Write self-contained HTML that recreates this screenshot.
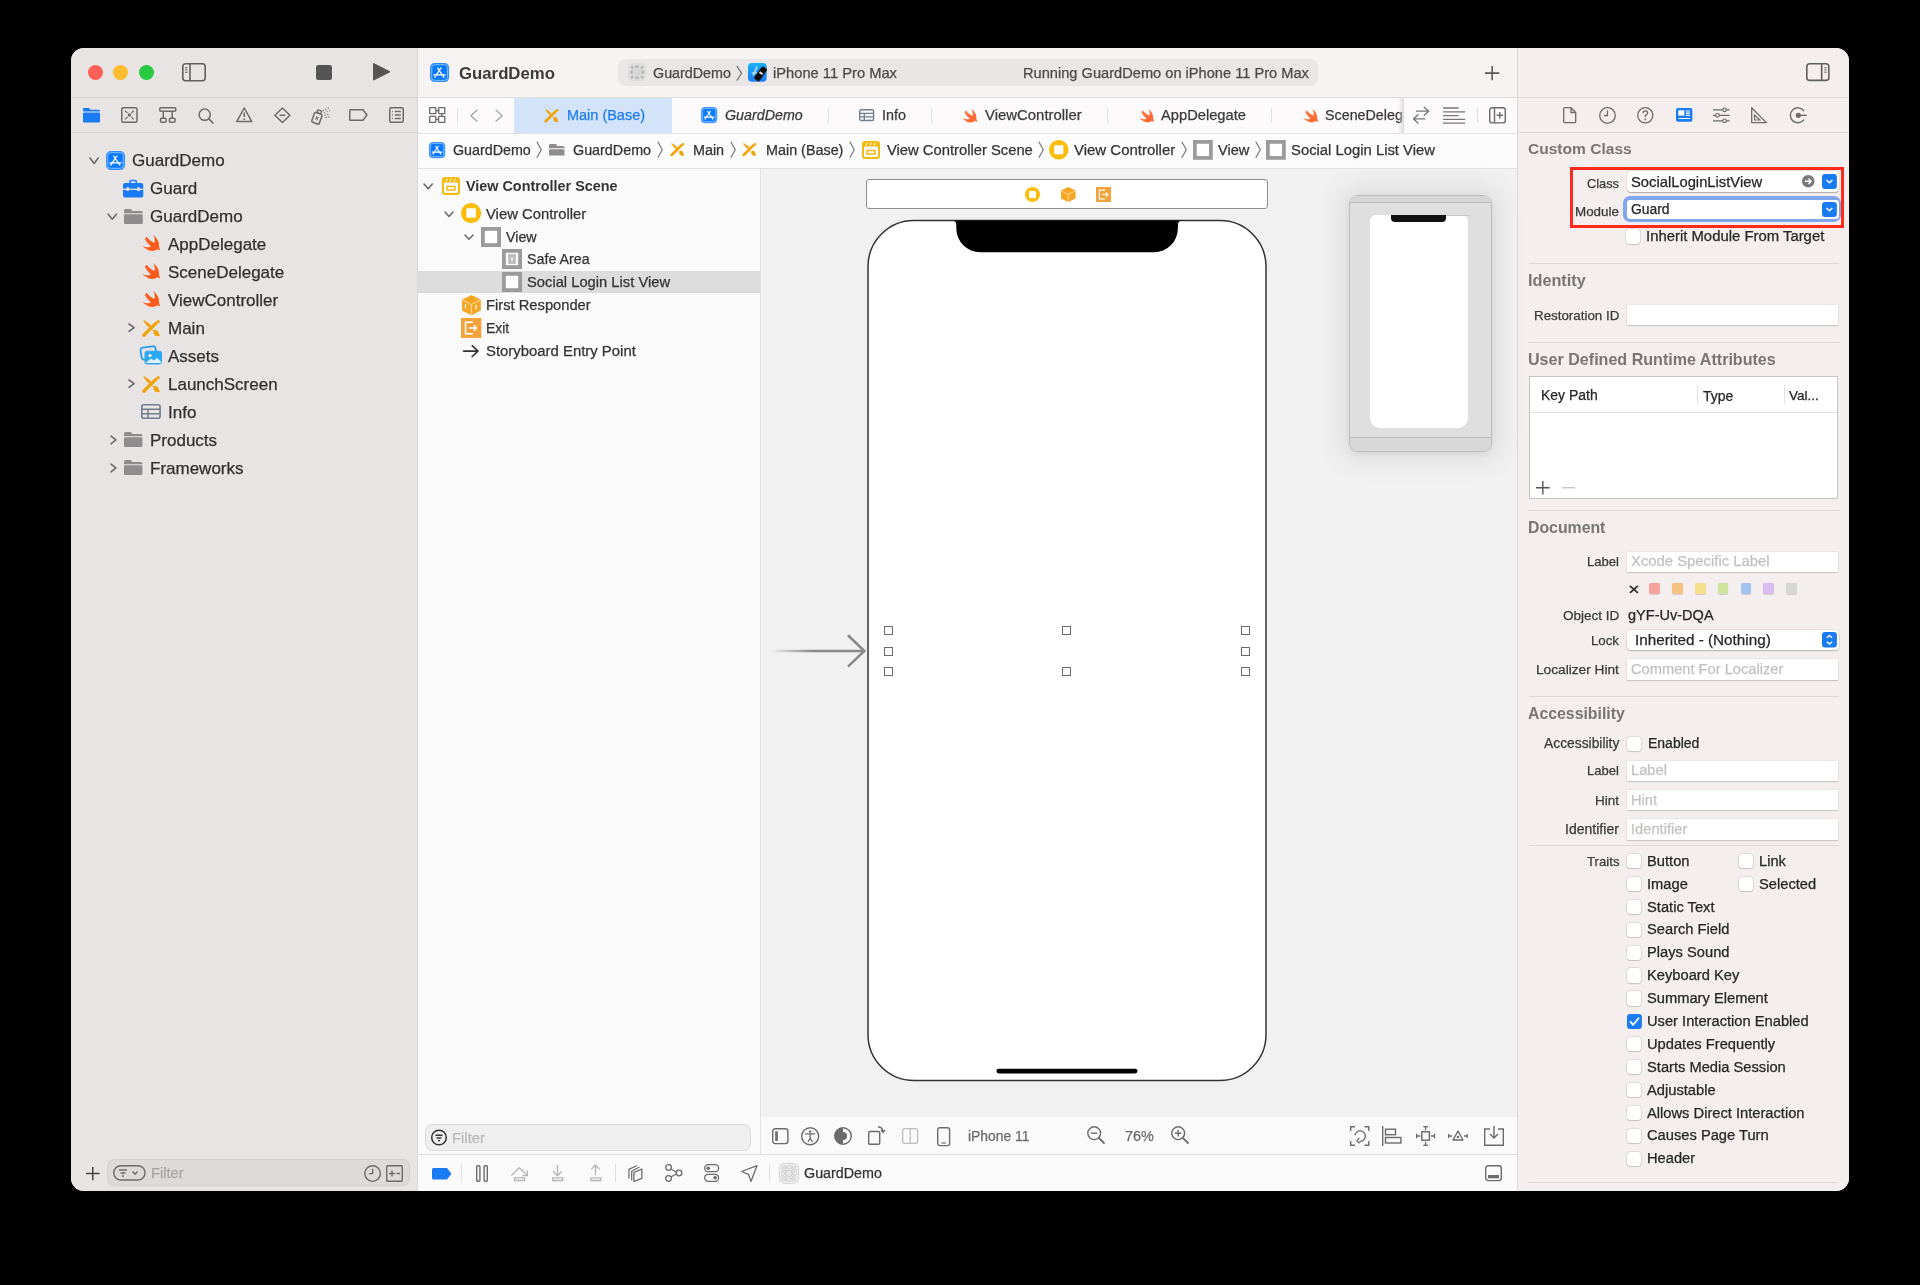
<!DOCTYPE html>
<html><head><meta charset="utf-8">
<style>
html,body{margin:0;padding:0;}
body{width:1920px;height:1285px;background:#000;position:relative;overflow:hidden;font-family:"Liberation Sans",sans-serif;color:#262626;}
.win{position:absolute;left:71px;top:48px;width:1778px;height:1143px;border-radius:13px;overflow:hidden;background:#f2eded;}
.in{position:absolute;left:-71px;top:-48px;width:1920px;height:1285px;}
.r{position:absolute;}
.t{position:absolute;white-space:nowrap;will-change:transform;-webkit-text-stroke:0.25px currentColor;}
svg{position:absolute;overflow:visible;}
</style></head>
<body>
<div class="win"><div class="in">
<div class="r" style="left:71.00px;top:48.00px;width:347.00px;height:1143.00px;background:#e9e4e4;"></div>
<div class="r" style="left:71.00px;top:97.00px;width:347.00px;height:1.00px;background:#d6d1d1;"></div>
<div class="r" style="left:71.00px;top:132.00px;width:347.00px;height:1.00px;background:#d6d1d1;"></div>
<div class="r" style="left:418.00px;top:48.00px;width:1100.00px;height:49.00px;background:#f7f3f3;"></div>
<div class="r" style="left:418.00px;top:97.00px;width:1100.00px;height:1.00px;background:#e0dcdc;"></div>
<div class="r" style="left:418.00px;top:98.00px;width:1100.00px;height:35.00px;background:#fcfafa;"></div>
<div class="r" style="left:418.00px;top:133.00px;width:1100.00px;height:1.00px;background:#e3e1e1;"></div>
<div class="r" style="left:418.00px;top:134.00px;width:1100.00px;height:34.00px;background:#fdfcfc;"></div>
<div class="r" style="left:418.00px;top:168.00px;width:1100.00px;height:1.00px;background:#e3e1e1;"></div>
<div class="r" style="left:418.00px;top:169.00px;width:342.00px;height:985.00px;background:#fafafa;"></div>
<div class="r" style="left:760.00px;top:169.00px;width:1.00px;height:985.00px;background:#e2e2e2;"></div>
<div class="r" style="left:761.00px;top:169.00px;width:757.00px;height:948.00px;background:#f1f1f1;"></div>
<div class="r" style="left:761.00px;top:1117.00px;width:757.00px;height:37.00px;background:#fafafa;"></div>
<div class="r" style="left:418.00px;top:1154.00px;width:1100.00px;height:1.00px;background:#e2e2e2;"></div>
<div class="r" style="left:418.00px;top:1155.00px;width:1100.00px;height:36.00px;background:#fafafa;"></div>
<div class="r" style="left:417.00px;top:48.00px;width:1.00px;height:1143.00px;background:#dcd7d7;"></div>
<div class="r" style="left:1517.00px;top:48.00px;width:1.00px;height:1143.00px;background:#dcd7d7;"></div>
<div class="r" style="left:1518.00px;top:48.00px;width:331.00px;height:1143.00px;background:#f4eeee;"></div>
<div class="r" style="left:1518.00px;top:97.00px;width:331.00px;height:1.00px;background:#dedada;"></div>
<div class="r" style="left:1518.00px;top:132.00px;width:331.00px;height:1.00px;background:#dedada;"></div>
<div class="r" style="left:88.00px;top:64.80px;width:15.20px;height:15.20px;background:#fe5f57;border-radius:50%"></div>
<div class="r" style="left:113.30px;top:64.80px;width:15.20px;height:15.20px;background:#febc2e;border-radius:50%"></div>
<div class="r" style="left:138.60px;top:64.80px;width:15.20px;height:15.20px;background:#28c840;border-radius:50%"></div>
<svg style="left:182.00px;top:62.50px;" width="24.00" height="18.50" viewBox="0 0 24.00 18.50"><rect x="0.8" y="0.8" width="22.4" height="16.9" rx="3" fill="none" stroke="#5f5f5f" stroke-width="1.6"/>
<path d="M8 1 V17.5" stroke="#5f5f5f" stroke-width="1.6"/>
<path d="M3 4.8 H5.5 M3 7 H5.5 M3 9.2 H5.5" stroke="#5f5f5f" stroke-width="1.1"/></svg>
<div class="r" style="left:316.00px;top:64.80px;width:15.60px;height:15.20px;background:#555555;border-radius:2.5px"></div>
<svg style="left:373.00px;top:63.00px;" width="17.50" height="17.60" viewBox="0 0 17.50 17.60"><path d="M0.5 0.5 L17 8.8 L0.5 17.1 Z" fill="#555555" stroke="#555" stroke-linejoin="round" stroke-width="1"/></svg>
<svg style="left:83.25px;top:108.00px;" width="17.00" height="14.50" viewBox="0 0 17.00 14.50"><path fill="#1a7cf5" d="M1.2 0 H6 L7.5 1.8 H15.8 Q17 1.8 17 3 V3.6 H0 V1.2 Q0 0 1.2 0 Z"/>
<rect x="0" y="4.6" width="17" height="9.9" rx="1" fill="#1a7cf5"/></svg>
<svg style="left:121.25px;top:107.00px;" width="16.75" height="16.00" viewBox="0 0 16.75 16.00"><rect x="0.75" y="0.75" width="15.25" height="14.5" rx="1.5" fill="none" stroke="#6b6b6b" stroke-width="1.5"/>
<circle cx="8.4" cy="8" r="1.7" fill="#6b6b6b"/><path d="M4 3.6 L6.5 6 M12.8 3.6 L10.3 6 M4 12.4 L6.5 10 M12.8 12.4 L10.3 10" stroke="#6b6b6b" stroke-width="1.2"/></svg>
<svg style="left:158.75px;top:107.00px;" width="17.50" height="16.00" viewBox="0 0 17.50 16.00"><rect x="0.75" y="0.75" width="16" height="3.6" rx="1" fill="none" stroke="#6b6b6b" stroke-width="1.5"/>
<path d="M4.3 4.4 V11 M13.2 4.4 V11" stroke="#6b6b6b" stroke-width="1.5"/>
<rect x="1.5" y="11.2" width="5.6" height="4" rx="1" fill="none" stroke="#6b6b6b" stroke-width="1.5"/>
<rect x="10.4" y="11.2" width="5.6" height="4" rx="1" fill="none" stroke="#6b6b6b" stroke-width="1.5"/></svg>
<svg style="left:198.00px;top:107.50px;" width="16.00" height="16.00" viewBox="0 0 16.00 16.00"><circle cx="6.7" cy="6.7" r="5.6" fill="none" stroke="#6b6b6b" stroke-width="1.5"/><path d="M10.8 10.8 L15 15" stroke="#6b6b6b" stroke-width="1.7" stroke-linecap="round"/></svg>
<svg style="left:235.50px;top:107.00px;" width="16.50" height="15.50" viewBox="0 0 16.50 15.50"><path d="M8.25 1 L15.8 14.6 H0.7 Z" fill="none" stroke="#6b6b6b" stroke-width="1.5" stroke-linejoin="round"/><path d="M8.25 5.5 V10" stroke="#6b6b6b" stroke-width="1.6"/><circle cx="8.25" cy="12.2" r="0.9" fill="#6b6b6b"/></svg>
<svg style="left:273.75px;top:107.00px;" width="16.75" height="16.50" viewBox="0 0 16.75 16.50"><path d="M8.4 1 L15.9 8.25 L8.4 15.5 L0.9 8.25 Z" fill="none" stroke="#6b6b6b" stroke-width="1.5" stroke-linejoin="round"/><path d="M5.5 8.25 H11.3" stroke="#6b6b6b" stroke-width="1.6"/></svg>
<svg style="left:310.75px;top:106.50px;" width="19.50" height="17.50" viewBox="0 0 19.50 17.50"><g transform="rotate(20 6 11)"><rect x="2" y="6" width="8" height="10.5" rx="1.5" fill="none" stroke="#6b6b6b" stroke-width="1.5"/><rect x="4" y="3" width="4" height="3" fill="none" stroke="#6b6b6b" stroke-width="1.3"/>
<path d="M4.5 9.5 L7.5 13 M7.5 9.5 L4.5 13" stroke="#6b6b6b" stroke-width="1"/></g>
<g fill="#6b6b6b"><circle cx="12.5" cy="3.5" r="0.65"/><circle cx="14.8" cy="2.5" r="0.65"/><circle cx="17.3" cy="1.2" r="0.65"/><circle cx="13.5" cy="5.8" r="0.65"/><circle cx="16" cy="4.6" r="0.65"/><circle cx="18.6" cy="3.8" r="0.65"/><circle cx="14.2" cy="8.2" r="0.65"/><circle cx="16.8" cy="7.5" r="0.65"/><circle cx="15.3" cy="10.5" r="0.65"/><circle cx="18" cy="10" r="0.65"/></g></svg>
<svg style="left:348.75px;top:109.00px;" width="18.75" height="12.00" viewBox="0 0 18.75 12.00"><path d="M1.5 0.75 H14 L17.9 6 L14 11.25 H1.5 Q0.75 11.25 0.75 10.5 V1.5 Q0.75 0.75 1.5 0.75 Z" fill="none" stroke="#6b6b6b" stroke-width="1.5" stroke-linejoin="round"/></svg>
<svg style="left:388.75px;top:107.00px;" width="15.00" height="16.00" viewBox="0 0 15.00 16.00"><rect x="0.75" y="0.75" width="13.5" height="14.5" rx="1.5" fill="none" stroke="#6b6b6b" stroke-width="1.5"/>
<path d="M3.2 4.5 H4 M3.2 8 H4 M3.2 11.5 H4" stroke="#6b6b6b" stroke-width="1.3"/><path d="M5.8 4.5 H11.8 M5.8 8 H11.8 M5.8 11.5 H11.8" stroke="#6b6b6b" stroke-width="1.5"/></svg>
<div class="t" style="left:132.00px;top:152.00px;font-size:17.00px;line-height:17.00px;color:#303030;">GuardDemo</div>
<div class="t" style="left:150.00px;top:180.00px;font-size:17.00px;line-height:17.00px;color:#303030;">Guard</div>
<div class="t" style="left:150.00px;top:208.00px;font-size:17.00px;line-height:17.00px;color:#303030;">GuardDemo</div>
<div class="t" style="left:168.00px;top:236.00px;font-size:17.00px;line-height:17.00px;color:#303030;">AppDelegate</div>
<div class="t" style="left:168.00px;top:264.00px;font-size:17.00px;line-height:17.00px;color:#303030;">SceneDelegate</div>
<div class="t" style="left:168.00px;top:292.00px;font-size:17.00px;line-height:17.00px;color:#303030;">ViewController</div>
<div class="t" style="left:168.00px;top:320.00px;font-size:17.00px;line-height:17.00px;color:#303030;">Main</div>
<div class="t" style="left:168.00px;top:348.00px;font-size:17.00px;line-height:17.00px;color:#303030;">Assets</div>
<div class="t" style="left:168.00px;top:376.00px;font-size:17.00px;line-height:17.00px;color:#303030;">LaunchScreen</div>
<div class="t" style="left:168.00px;top:404.00px;font-size:17.00px;line-height:17.00px;color:#303030;">Info</div>
<div class="t" style="left:150.00px;top:432.00px;font-size:17.00px;line-height:17.00px;color:#303030;">Products</div>
<div class="t" style="left:150.00px;top:460.00px;font-size:17.00px;line-height:17.00px;color:#303030;">Frameworks</div>
<svg style="left:89.25px;top:157.00px;" width="10.25" height="7.50" viewBox="0 0 10.25 7.50"><path d="M1 1 L5.12 6.50 L9.25 1" stroke="#6e6b6b" stroke-width="1.60" fill="none" stroke-linecap="round" stroke-linejoin="round"/></svg>
<svg style="left:106.25px;top:150.50px;" width="19.00" height="19.00" viewBox="0 0 19.00 19.00"><g transform="scale(1.0000)">
<rect x="0.5" y="0.5" width="18" height="18" rx="4.2" fill="#0a7bff" stroke="#2e8dff" stroke-width="1"/>
<rect x="1.7" y="1.7" width="15.6" height="15.6" rx="3" fill="none" stroke="#cfe4ff" stroke-width="0.8" opacity="0.8"/>
<g stroke="#fff" stroke-width="1.25" stroke-linecap="round" fill="none">
<path d="M7.7 5 L9.3 7.3 L10.9 5 M9.3 7.3 L4.8 14.2 M9.6 8 L13.9 14.2 M3.9 11.9 H11.6 M12.6 11.9 H15.1"/>
</g></g></svg>
<svg style="left:123.00px;top:179.50px;" width="20.25" height="17.50" viewBox="0 0 20.25 17.50"><path d="M7 3 V1.5 Q7 0.5 8 0.5 H12.25 Q13.25 0.5 13.25 1.5 V3" fill="none" stroke="#1a7cf5" stroke-width="1.6"/>
<rect x="0" y="3" width="20.25" height="14.5" rx="2" fill="#1a7cf5"/>
<rect x="0" y="8.6" width="20.25" height="1.3" fill="#e9e4e4"/><rect x="3.5" y="7.3" width="2.6" height="3.8" rx="0.5" fill="#e9e4e4"/><rect x="14.2" y="7.3" width="2.6" height="3.8" rx="0.5" fill="#e9e4e4"/></svg>
<svg style="left:107.00px;top:213.00px;" width="10.50" height="7.20" viewBox="0 0 10.50 7.20"><path d="M1 1 L5.25 6.20 L9.50 1" stroke="#6e6b6b" stroke-width="1.60" fill="none" stroke-linecap="round" stroke-linejoin="round"/></svg>
<svg style="left:123.75px;top:208.75px;" width="18.75" height="15.00" viewBox="0 0 18.75 15.00"><path fill="#8e8c8c" d="M1.5 0 H7 L8.5 2 H17.2 Q18.8 2 18.8 3.5 V4.2 H0 V1.5 Q0 0 1.5 0 Z"/>
<rect x="0" y="5.2" width="18.8" height="9.8" rx="1.2" fill="#8e8c8c"/></svg>
<svg style="left:141.90px;top:235.20px;" width="18.50" height="16.60" viewBox="0 0 18.50 16.60"><g transform="scale(1.000)"><path fill="#fa5a1a" d="M11.35 0 C14.5 2.5 17.5 6.5 16.9 10.9 C17.4 12.8 18 14.5 18.3 15.8 C17.2 14.8 16.2 14.3 15.3 14.3 C12.5 16.6 7.5 16.6 4.2 13.8 C2.6 12.8 1.2 11.8 0.2 10.9 C3.3 12.2 6.6 12.8 9.2 11.6 C6.8 9.6 4.3 6.8 2.5 3 L3.6 3.3 L4.6 1.8 C7 4.5 9.5 7 12.6 8.1 C13.2 5.5 12.6 2.5 11.35 0 Z"/>
<path d="M3.4 3.1 L8.5 8.3" stroke="#fff" stroke-opacity="0.35" stroke-width="0.5"/></g></svg>
<svg style="left:141.90px;top:263.20px;" width="18.50" height="16.60" viewBox="0 0 18.50 16.60"><g transform="scale(1.000)"><path fill="#fa5a1a" d="M11.35 0 C14.5 2.5 17.5 6.5 16.9 10.9 C17.4 12.8 18 14.5 18.3 15.8 C17.2 14.8 16.2 14.3 15.3 14.3 C12.5 16.6 7.5 16.6 4.2 13.8 C2.6 12.8 1.2 11.8 0.2 10.9 C3.3 12.2 6.6 12.8 9.2 11.6 C6.8 9.6 4.3 6.8 2.5 3 L3.6 3.3 L4.6 1.8 C7 4.5 9.5 7 12.6 8.1 C13.2 5.5 12.6 2.5 11.35 0 Z"/>
<path d="M3.4 3.1 L8.5 8.3" stroke="#fff" stroke-opacity="0.35" stroke-width="0.5"/></g></svg>
<svg style="left:141.90px;top:291.20px;" width="18.50" height="16.60" viewBox="0 0 18.50 16.60"><g transform="scale(1.000)"><path fill="#fa5a1a" d="M11.35 0 C14.5 2.5 17.5 6.5 16.9 10.9 C17.4 12.8 18 14.5 18.3 15.8 C17.2 14.8 16.2 14.3 15.3 14.3 C12.5 16.6 7.5 16.6 4.2 13.8 C2.6 12.8 1.2 11.8 0.2 10.9 C3.3 12.2 6.6 12.8 9.2 11.6 C6.8 9.6 4.3 6.8 2.5 3 L3.6 3.3 L4.6 1.8 C7 4.5 9.5 7 12.6 8.1 C13.2 5.5 12.6 2.5 11.35 0 Z"/>
<path d="M3.4 3.1 L8.5 8.3" stroke="#fff" stroke-opacity="0.35" stroke-width="0.5"/></g></svg>
<svg style="left:127.50px;top:322.90px;" width="7.10" height="9.40" viewBox="0 0 7.10 9.40"><path d="M1 1 L6.10 4.70 L1 8.40" stroke="#6e6b6b" stroke-width="1.60" fill="none" stroke-linecap="round" stroke-linejoin="round"/></svg>
<svg style="left:142.80px;top:319.80px;" width="17.00" height="16.50" viewBox="0 0 17.00 16.50"><g transform="scale(1.000)" fill="#f0a30a">
<path d="M0.2 0.8 Q0.4 0 1.2 0.2 Q5.5 2.5 8.4 5.8 L6.4 8.0 Q3 5 0.2 0.8 Z"/>
<path d="M0.8 15.2 L12.9 3.4" stroke="#f0a30a" stroke-width="3.3" stroke-linecap="round" fill="none"/>
<circle cx="15.1" cy="1.7" r="1.65"/>
<path d="M10.6 10.8 Q11.8 9.6 13.2 9.9 Q15.1 10.4 15.6 12.6 Q16 14.5 16.9 15.9 Q13.6 16.6 11.6 15.2 Q9.9 13.9 10.6 10.8 Z"/>
<circle cx="9.9" cy="10.2" r="0.8"/></g></svg>
<svg style="left:140.25px;top:345.90px;" width="22.50" height="18.80" viewBox="0 0 22.50 18.80"><rect x="1" y="1" width="15" height="12" rx="2.5" fill="none" stroke="#25a0f0" stroke-width="1.8" transform="rotate(-8 8 7)"/>
<rect x="5" y="5.2" width="16.5" height="12.8" rx="2" fill="#2aa7f5" stroke="#2aa7f5" stroke-width="1"/>
<circle cx="10" cy="9.6" r="1.6" fill="#fff"/><path d="M6 16.5 L11 12.5 L14 14.5 L17 12 L21 15.5 V17 H6 Z" fill="#fff" opacity="0.85"/></svg>
<svg style="left:127.50px;top:378.90px;" width="7.10" height="9.40" viewBox="0 0 7.10 9.40"><path d="M1 1 L6.10 4.70 L1 8.40" stroke="#6e6b6b" stroke-width="1.60" fill="none" stroke-linecap="round" stroke-linejoin="round"/></svg>
<svg style="left:142.80px;top:375.80px;" width="17.00" height="16.50" viewBox="0 0 17.00 16.50"><g transform="scale(1.000)" fill="#f0a30a">
<path d="M0.2 0.8 Q0.4 0 1.2 0.2 Q5.5 2.5 8.4 5.8 L6.4 8.0 Q3 5 0.2 0.8 Z"/>
<path d="M0.8 15.2 L12.9 3.4" stroke="#f0a30a" stroke-width="3.3" stroke-linecap="round" fill="none"/>
<circle cx="15.1" cy="1.7" r="1.65"/>
<path d="M10.6 10.8 Q11.8 9.6 13.2 9.9 Q15.1 10.4 15.6 12.6 Q16 14.5 16.9 15.9 Q13.6 16.6 11.6 15.2 Q9.9 13.9 10.6 10.8 Z"/>
<circle cx="9.9" cy="10.2" r="0.8"/></g></svg>
<svg style="left:141.00px;top:404.00px;" width="19.90" height="15.00" viewBox="0 0 19.90 15.00"><rect x="0.8" y="0.8" width="18.3" height="13.4" rx="2" fill="none" stroke="#6f7f8f" stroke-width="1.6"/>
<path d="M0.8 5.2 H19 M0.8 9.8 H19 M7 5.2 V14" stroke="#6f7f8f" stroke-width="1.5"/></svg>
<svg style="left:109.70px;top:434.60px;" width="6.90" height="9.80" viewBox="0 0 6.90 9.80"><path d="M1 1 L5.90 4.90 L1 8.80" stroke="#6e6b6b" stroke-width="1.60" fill="none" stroke-linecap="round" stroke-linejoin="round"/></svg>
<svg style="left:123.75px;top:432.20px;" width="18.40" height="15.00" viewBox="0 0 18.40 15.00"><path fill="#8e8c8c" d="M1.5 0 H7 L8.5 2 H16.9 Q18.4 2 18.4 3.5 V4.2 H0 V1.5 Q0 0 1.5 0 Z"/>
<rect x="0" y="5.2" width="18.4" height="9.8" rx="1.2" fill="#8e8c8c"/></svg>
<svg style="left:109.70px;top:462.60px;" width="6.90" height="9.80" viewBox="0 0 6.90 9.80"><path d="M1 1 L5.90 4.90 L1 8.80" stroke="#6e6b6b" stroke-width="1.60" fill="none" stroke-linecap="round" stroke-linejoin="round"/></svg>
<svg style="left:123.75px;top:460.20px;" width="18.40" height="15.00" viewBox="0 0 18.40 15.00"><path fill="#8e8c8c" d="M1.5 0 H7 L8.5 2 H16.9 Q18.4 2 18.4 3.5 V4.2 H0 V1.5 Q0 0 1.5 0 Z"/>
<rect x="0" y="5.2" width="18.4" height="9.8" rx="1.2" fill="#8e8c8c"/></svg>
<div class="r" style="left:107.00px;top:1159.00px;width:303.00px;height:27.00px;background:#dedad9;border-radius:8px;box-shadow:inset 0 0 0 1px #d3cfcf"></div>
<div class="t" style="left:150.50px;top:1166.00px;font-size:14.70px;line-height:14.70px;color:#a9a6a6;">Filter</div>
<svg style="left:86.25px;top:1166.70px;" width="13.55" height="13.20" viewBox="0 0 13.55 13.20"><path d="M6.8 0 V13.2 M0 6.6 H13.55" stroke="#444" stroke-width="1.5"/></svg>
<svg style="left:112.50px;top:1165.20px;" width="32.80" height="15.80" viewBox="0 0 32.80 15.80"><rect x="0.75" y="0.75" width="31.3" height="14.3" rx="7.15" fill="none" stroke="#6b6b6b" stroke-width="1.4"/>
<path d="M6 5 H14 M7.5 8 H12.5 M9 11 H11" stroke="#6b6b6b" stroke-width="1.4"/><path d="M19.5 6.5 L22 9.2 L24.5 6.5" stroke="#6b6b6b" stroke-width="1.4" fill="none"/></svg>
<svg style="left:364.00px;top:1164.80px;" width="17.20" height="17.20" viewBox="0 0 17.20 17.20"><circle cx="8.6" cy="8.6" r="7.8" fill="none" stroke="#6b6b6b" stroke-width="1.4"/><path d="M8.6 3.8 V8.6 H5" stroke="#6b6b6b" stroke-width="1.4" fill="none"/></svg>
<svg style="left:386.00px;top:1164.80px;" width="17.00" height="17.00" viewBox="0 0 17.00 17.00"><rect x="0.7" y="0.7" width="15.6" height="15.6" rx="1" fill="none" stroke="#6b6b6b" stroke-width="1.4"/><path d="M3 8.5 H9 M6 5.5 V11.5 M10.5 8.5 H14" stroke="#6b6b6b" stroke-width="1.4"/></svg>
<div class="t" style="left:459.00px;top:66.00px;font-size:16.77px;line-height:16.77px;color:#3b3b3b;font-weight:bold;-webkit-text-stroke:0;">GuardDemo</div>
<div class="r" style="left:618.00px;top:59.00px;width:700.00px;height:27.00px;background:#ebe6e6;border-radius:8px"></div>
<div class="t" style="left:652.50px;top:66.00px;font-size:14.32px;line-height:14.32px;color:#4a4a4a;">GuardDemo</div>
<div class="t" style="left:773.30px;top:66.00px;font-size:14.71px;line-height:14.71px;color:#4a4a4a;">iPhone 11 Pro Max</div>
<div class="t" style="left:1023.40px;top:66.00px;font-size:14.63px;line-height:14.63px;color:#4a4a4a;">Running GuardDemo on iPhone 11 Pro Max</div>
<svg style="left:429.90px;top:62.80px;" width="19.10" height="19.10" viewBox="0 0 19.10 19.10"><g transform="scale(1.0053)">
<rect x="0.5" y="0.5" width="18" height="18" rx="4.2" fill="#0a7bff" stroke="#2e8dff" stroke-width="1"/>
<rect x="1.7" y="1.7" width="15.6" height="15.6" rx="3" fill="none" stroke="#cfe4ff" stroke-width="0.8" opacity="0.8"/>
<g stroke="#fff" stroke-width="1.25" stroke-linecap="round" fill="none">
<path d="M7.7 5 L9.3 7.3 L10.9 5 M9.3 7.3 L4.8 14.2 M9.6 8 L13.9 14.2 M3.9 11.9 H11.6 M12.6 11.9 H15.1"/>
</g></g></svg>
<svg style="left:627.80px;top:63.40px;" width="18.30" height="18.30" viewBox="0 0 18.30 18.30"><rect x="0" y="0" width="18.3" height="18.3" rx="4.5" fill="#dedcdc"/><ellipse cx="4.60" cy="4.60" rx="2.1" ry="1.55" transform="rotate(45 4.60 4.60)" fill="#b9baba"/><ellipse cx="9.15" cy="3.60" rx="2.1" ry="1.55" transform="rotate(0 9.15 3.60)" fill="#b9baba"/><ellipse cx="13.70" cy="4.60" rx="2.1" ry="1.55" transform="rotate(-45 13.70 4.60)" fill="#b9baba"/><ellipse cx="3.60" cy="9.15" rx="2.1" ry="1.55" transform="rotate(90 3.60 9.15)" fill="#b9baba"/><ellipse cx="14.70" cy="9.15" rx="2.1" ry="1.55" transform="rotate(90 14.70 9.15)" fill="#b9baba"/><ellipse cx="4.60" cy="13.70" rx="2.1" ry="1.55" transform="rotate(-45 4.60 13.70)" fill="#b9baba"/><ellipse cx="9.15" cy="14.70" rx="2.1" ry="1.55" transform="rotate(0 9.15 14.70)" fill="#b9baba"/><ellipse cx="13.70" cy="13.70" rx="2.1" ry="1.55" transform="rotate(45 13.70 13.70)" fill="#b9baba"/>
<circle cx="9.15" cy="9.15" r="2.9" fill="none" stroke="#c9c9c9" stroke-width="1.1"/><circle cx="9.15" cy="9.15" r="1" fill="#d0d0d0"/>
<path d="M6.1 0.5 V17.8 M12.2 0.5 V17.8 M0.5 6.1 H17.8 M0.5 12.2 H17.8" stroke="#e6e6e6" stroke-width="0.6"/></svg>
<svg style="left:736.00px;top:64.50px;" width="6.50" height="16.50" viewBox="0 0 6.50 16.50"><path d="M0.8 0.8 L5.6 8.25 L0.8 15.7" stroke="#777" stroke-width="1.3" fill="none" stroke-linejoin="round"/></svg>
<svg style="left:748.25px;top:63.20px;" width="18.70" height="18.80" viewBox="0 0 18.70 18.80"><defs><linearGradient id="dg" x1="0" y1="0" x2="0" y2="1"><stop offset="0" stop-color="#19b0f6"/><stop offset="1" stop-color="#1f7cf6"/></linearGradient></defs>
<rect x="0" y="0" width="18.7" height="18.8" rx="4" fill="url(#dg)"/>
<path d="M9 3.5 L5.2 12.5 M3.8 10 H9.5" stroke="#dcecff" stroke-width="1.2"/>
<g transform="rotate(35 12.5 11)"><rect x="9.3" y="3.3" width="6.4" height="15" rx="1.6" fill="#0d0d0d"/><rect x="10.6" y="9" width="3.8" height="2" fill="#e8e8e8"/></g></svg>
<svg style="left:1485.00px;top:65.50px;" width="14.30" height="14.35" viewBox="0 0 14.30 14.35"><path d="M7.15 0 V14.35 M0 7.175 H14.3" stroke="#5a5a5a" stroke-width="1.6"/></svg>
<svg style="left:1805.70px;top:62.80px;" width="23.70" height="18.20" viewBox="0 0 23.70 18.20"><rect x="0.8" y="0.8" width="22.1" height="16.6" rx="3" fill="none" stroke="#5f5f5f" stroke-width="1.6"/>
<path d="M15.7 1 V17.2" stroke="#5f5f5f" stroke-width="1.6"/>
<path d="M18.3 4.8 H20.6 M18.3 7 H20.6 M18.3 9.2 H20.6" stroke="#5f5f5f" stroke-width="1.1"/></svg>
<div class="r" style="left:514.00px;top:98.00px;width:158.00px;height:35.00px;background:#d3e4fa;"></div>
<div class="t" style="left:566.75px;top:108.00px;font-size:14.47px;line-height:14.47px;color:#1c7cf0;">Main (Base)</div>
<div class="t" style="left:724.80px;top:108.00px;font-size:14.27px;line-height:14.27px;color:#3a3a3a;font-style:italic;">GuardDemo</div>
<div class="t" style="left:881.70px;top:108.00px;font-size:14.39px;line-height:14.39px;color:#3a3a3a;">Info</div>
<div class="t" style="left:984.70px;top:108.00px;font-size:14.91px;line-height:14.91px;color:#3a3a3a;">ViewController</div>
<div class="t" style="left:1161.20px;top:108.00px;font-size:14.70px;line-height:14.70px;color:#3a3a3a;">AppDelegate</div>
<div class="r" style="left:1324px;top:98px;width:80px;height:35px;overflow:hidden">
<div class="t" style="left:0.70px;top:10.00px;font-size:14.30px;line-height:14.30px;color:#3a3a3a;">SceneDelegate</div>
</div>
<div class="r" style="left:1398.00px;top:98.00px;width:6.00px;height:35.00px;background:linear-gradient(to right, rgba(252,250,250,0), rgba(215,213,213,0.85));"></div>
<div class="r" style="left:1404.00px;top:98.00px;width:113.00px;height:35.00px;background:#fcfafa;"></div>
<div class="r" style="left:457.30px;top:108.00px;width:1.00px;height:15.00px;background:#e0dede;"></div>
<div class="r" style="left:828.30px;top:108.00px;width:1.00px;height:15.00px;background:#e0dede;"></div>
<div class="r" style="left:931.10px;top:108.00px;width:1.00px;height:15.00px;background:#e0dede;"></div>
<div class="r" style="left:1107.40px;top:108.00px;width:1.00px;height:15.00px;background:#e0dede;"></div>
<div class="r" style="left:1270.90px;top:108.00px;width:1.00px;height:15.00px;background:#e0dede;"></div>
<div class="r" style="left:1476.50px;top:108.00px;width:1.00px;height:15.00px;background:#e0dede;"></div>
<svg style="left:429.25px;top:107.00px;" width="16.60" height="16.00" viewBox="0 0 16.60 16.00"><g fill="none" stroke="#6b6b6b" stroke-width="1.3">
<rect x="0.65" y="0.65" width="6.2" height="6" rx="0.6"/><rect x="9.6" y="0.65" width="6.2" height="6" rx="0.6"/>
<rect x="0.65" y="9.4" width="6.2" height="6" rx="0.6"/><rect x="9.6" y="9.4" width="6.2" height="6" rx="0.6"/>
<path d="M6.8 3.6 H10.5 M12.7 6.6 V9.6 M9.6 12.4 H6"/></g></svg>
<svg style="left:470.00px;top:108.50px;" width="8.00" height="13.30" viewBox="0 0 8.00 13.30"><path d="M7.3 0.7 L0.9 6.65 L7.3 12.6" stroke="#a8a8a8" stroke-width="1.4" fill="none"/></svg>
<svg style="left:494.60px;top:108.50px;" width="8.00" height="13.30" viewBox="0 0 8.00 13.30"><path d="M0.7 0.7 L7.1 6.65 L0.7 12.6" stroke="#a8a8a8" stroke-width="1.4" fill="none"/></svg>
<svg style="left:544.90px;top:108.50px;" width="13.70" height="13.30" viewBox="0 0 13.70 13.30"><g transform="scale(0.806)" fill="#f0a30a">
<path d="M0.2 0.8 Q0.4 0 1.2 0.2 Q5.5 2.5 8.4 5.8 L6.4 8.0 Q3 5 0.2 0.8 Z"/>
<path d="M0.8 15.2 L12.9 3.4" stroke="#f0a30a" stroke-width="3.3" stroke-linecap="round" fill="none"/>
<circle cx="15.1" cy="1.7" r="1.65"/>
<path d="M10.6 10.8 Q11.8 9.6 13.2 9.9 Q15.1 10.4 15.6 12.6 Q16 14.5 16.9 15.9 Q13.6 16.6 11.6 15.2 Q9.9 13.9 10.6 10.8 Z"/>
<circle cx="9.9" cy="10.2" r="0.8"/></g></svg>
<svg style="left:701.40px;top:107.40px;" width="16.20" height="16.20" viewBox="0 0 16.20 16.20"><g transform="scale(0.8526)">
<rect x="0.5" y="0.5" width="18" height="18" rx="4.2" fill="#0a7bff" stroke="#2e8dff" stroke-width="1"/>
<rect x="1.7" y="1.7" width="15.6" height="15.6" rx="3" fill="none" stroke="#cfe4ff" stroke-width="0.8" opacity="0.8"/>
<g stroke="#fff" stroke-width="1.25" stroke-linecap="round" fill="none">
<path d="M7.7 5 L9.3 7.3 L10.9 5 M9.3 7.3 L4.8 14.2 M9.6 8 L13.9 14.2 M3.9 11.9 H11.6 M12.6 11.9 H15.1"/>
</g></g></svg>
<svg style="left:859.40px;top:109.00px;" width="15.30" height="12.20" viewBox="0 0 15.30 12.20"><rect x="0.7" y="0.7" width="13.9" height="10.8" rx="1.5" fill="none" stroke="#70808f" stroke-width="1.4"/>
<path d="M0.7 4.3 H14.6 M0.7 7.9 H14.6 M5.3 4.3 V11.5" stroke="#70808f" stroke-width="1.3"/></svg>
<svg style="left:962.30px;top:108.90px;" width="15.60" height="14.00" viewBox="0 0 15.60 14.00"><g transform="scale(0.843)"><path fill="#ff6a35" d="M11.35 0 C14.5 2.5 17.5 6.5 16.9 10.9 C17.4 12.8 18 14.5 18.3 15.8 C17.2 14.8 16.2 14.3 15.3 14.3 C12.5 16.6 7.5 16.6 4.2 13.8 C2.6 12.8 1.2 11.8 0.2 10.9 C3.3 12.2 6.6 12.8 9.2 11.6 C6.8 9.6 4.3 6.8 2.5 3 L3.6 3.3 L4.6 1.8 C7 4.5 9.5 7 12.6 8.1 C13.2 5.5 12.6 2.5 11.35 0 Z"/>
<path d="M3.4 3.1 L8.5 8.3" stroke="#fff" stroke-opacity="0.35" stroke-width="0.5"/></g></svg>
<svg style="left:1139.30px;top:108.90px;" width="15.40" height="13.82" viewBox="0 0 15.40 13.82"><g transform="scale(0.832)"><path fill="#ff6a35" d="M11.35 0 C14.5 2.5 17.5 6.5 16.9 10.9 C17.4 12.8 18 14.5 18.3 15.8 C17.2 14.8 16.2 14.3 15.3 14.3 C12.5 16.6 7.5 16.6 4.2 13.8 C2.6 12.8 1.2 11.8 0.2 10.9 C3.3 12.2 6.6 12.8 9.2 11.6 C6.8 9.6 4.3 6.8 2.5 3 L3.6 3.3 L4.6 1.8 C7 4.5 9.5 7 12.6 8.1 C13.2 5.5 12.6 2.5 11.35 0 Z"/>
<path d="M3.4 3.1 L8.5 8.3" stroke="#fff" stroke-opacity="0.35" stroke-width="0.5"/></g></svg>
<svg style="left:1302.80px;top:108.90px;" width="15.40" height="13.82" viewBox="0 0 15.40 13.82"><g transform="scale(0.832)"><path fill="#ff6a35" d="M11.35 0 C14.5 2.5 17.5 6.5 16.9 10.9 C17.4 12.8 18 14.5 18.3 15.8 C17.2 14.8 16.2 14.3 15.3 14.3 C12.5 16.6 7.5 16.6 4.2 13.8 C2.6 12.8 1.2 11.8 0.2 10.9 C3.3 12.2 6.6 12.8 9.2 11.6 C6.8 9.6 4.3 6.8 2.5 3 L3.6 3.3 L4.6 1.8 C7 4.5 9.5 7 12.6 8.1 C13.2 5.5 12.6 2.5 11.35 0 Z"/>
<path d="M3.4 3.1 L8.5 8.3" stroke="#fff" stroke-opacity="0.35" stroke-width="0.5"/></g></svg>
<svg style="left:1412.00px;top:106.00px;" width="18.00" height="18.00" viewBox="0 0 18.00 18.00"><g stroke="#777" stroke-width="1.3" fill="none" stroke-linecap="round" stroke-linejoin="round">
<path d="M4.5 5.2 H16.6 M12.2 1.2 L16.6 5.2 L12.2 9.2"/><path d="M13 12.9 H1.5 M6 8.8 L1.5 12.9 L6 17"/></g></svg>
<svg style="left:1442.80px;top:106.50px;" width="23.00" height="17.00" viewBox="0 0 23.00 17.00"><path d="M0 1 H15.7 M0 4.8 H22.2 M0 8.6 H15.7 M0 12.4 H22.2 M0 16.2 H22.2" stroke="#777" stroke-width="1.3"/></svg>
<svg style="left:1489.00px;top:106.70px;" width="17.00" height="16.60" viewBox="0 0 17.00 16.60"><rect x="0.7" y="0.7" width="15.6" height="15.2" rx="2.5" fill="none" stroke="#6b6b6b" stroke-width="1.4"/>
<path d="M5.5 0.7 V16 M10.8 5 V11.6 M7.6 8.3 H14" stroke="#6b6b6b" stroke-width="1.4"/></svg>
<div class="t" style="left:452.70px;top:143.00px;font-size:14.28px;line-height:14.28px;color:#333333;">GuardDemo</div>
<div class="t" style="left:573.10px;top:143.00px;font-size:14.34px;line-height:14.34px;color:#333333;">GuardDemo</div>
<div class="t" style="left:693.40px;top:143.00px;font-size:14.35px;line-height:14.35px;color:#333333;">Main</div>
<div class="t" style="left:766.00px;top:143.00px;font-size:14.36px;line-height:14.36px;color:#333333;">Main (Base)</div>
<div class="t" style="left:886.90px;top:143.00px;font-size:14.77px;line-height:14.77px;color:#333333;">View Controller Scene</div>
<div class="t" style="left:1074.40px;top:143.00px;font-size:14.97px;line-height:14.97px;color:#333333;">View Controller</div>
<div class="t" style="left:1218.00px;top:143.00px;font-size:14.61px;line-height:14.61px;color:#333333;">View</div>
<div class="t" style="left:1291.00px;top:143.00px;font-size:14.83px;line-height:14.83px;color:#333333;">Social Login List View</div>
<svg style="left:428.60px;top:142.10px;" width="16.20" height="16.20" viewBox="0 0 16.20 16.20"><g transform="scale(0.8526)">
<rect x="0.5" y="0.5" width="18" height="18" rx="4.2" fill="#0a7bff" stroke="#2e8dff" stroke-width="1"/>
<rect x="1.7" y="1.7" width="15.6" height="15.6" rx="3" fill="none" stroke="#cfe4ff" stroke-width="0.8" opacity="0.8"/>
<g stroke="#fff" stroke-width="1.25" stroke-linecap="round" fill="none">
<path d="M7.7 5 L9.3 7.3 L10.9 5 M9.3 7.3 L4.8 14.2 M9.6 8 L13.9 14.2 M3.9 11.9 H11.6 M12.6 11.9 H15.1"/>
</g></g></svg>
<svg style="left:536.30px;top:141.00px;" width="6.00" height="17.60" viewBox="0 0 6.00 17.60"><path d="M0.8 0.8 L5.3 8.8 L0.8 16.8" stroke="#7a7a7a" stroke-width="1.25" fill="none" stroke-linejoin="round"/></svg>
<svg style="left:549.20px;top:144.20px;" width="15.50" height="11.60" viewBox="0 0 15.50 11.60"><path fill="#8e8c8c" d="M1.5 0 H7 L8.5 2 H14.0 Q15.5 2 15.5 3.5 V4.2 H0 V1.5 Q0 0 1.5 0 Z"/>
<rect x="0" y="5.2" width="15.5" height="6.4" rx="1.2" fill="#8e8c8c"/></svg>
<svg style="left:657.00px;top:141.00px;" width="6.00" height="17.60" viewBox="0 0 6.00 17.60"><path d="M0.8 0.8 L5.3 8.8 L0.8 16.8" stroke="#7a7a7a" stroke-width="1.25" fill="none" stroke-linejoin="round"/></svg>
<svg style="left:670.70px;top:143.20px;" width="13.40" height="13.01" viewBox="0 0 13.40 13.01"><g transform="scale(0.788)" fill="#f0a30a">
<path d="M0.2 0.8 Q0.4 0 1.2 0.2 Q5.5 2.5 8.4 5.8 L6.4 8.0 Q3 5 0.2 0.8 Z"/>
<path d="M0.8 15.2 L12.9 3.4" stroke="#f0a30a" stroke-width="3.3" stroke-linecap="round" fill="none"/>
<circle cx="15.1" cy="1.7" r="1.65"/>
<path d="M10.6 10.8 Q11.8 9.6 13.2 9.9 Q15.1 10.4 15.6 12.6 Q16 14.5 16.9 15.9 Q13.6 16.6 11.6 15.2 Q9.9 13.9 10.6 10.8 Z"/>
<circle cx="9.9" cy="10.2" r="0.8"/></g></svg>
<svg style="left:729.70px;top:141.00px;" width="6.00" height="17.60" viewBox="0 0 6.00 17.60"><path d="M0.8 0.8 L5.3 8.8 L0.8 16.8" stroke="#7a7a7a" stroke-width="1.25" fill="none" stroke-linejoin="round"/></svg>
<svg style="left:742.70px;top:143.20px;" width="13.40" height="13.01" viewBox="0 0 13.40 13.01"><g transform="scale(0.788)" fill="#f0a30a">
<path d="M0.2 0.8 Q0.4 0 1.2 0.2 Q5.5 2.5 8.4 5.8 L6.4 8.0 Q3 5 0.2 0.8 Z"/>
<path d="M0.8 15.2 L12.9 3.4" stroke="#f0a30a" stroke-width="3.3" stroke-linecap="round" fill="none"/>
<circle cx="15.1" cy="1.7" r="1.65"/>
<path d="M10.6 10.8 Q11.8 9.6 13.2 9.9 Q15.1 10.4 15.6 12.6 Q16 14.5 16.9 15.9 Q13.6 16.6 11.6 15.2 Q9.9 13.9 10.6 10.8 Z"/>
<circle cx="9.9" cy="10.2" r="0.8"/></g></svg>
<svg style="left:849.20px;top:141.00px;" width="6.00" height="17.60" viewBox="0 0 6.00 17.60"><path d="M0.8 0.8 L5.3 8.8 L0.8 16.8" stroke="#7a7a7a" stroke-width="1.25" fill="none" stroke-linejoin="round"/></svg>
<svg style="left:861.90px;top:140.90px;" width="18.00" height="18.00" viewBox="0 0 18.00 18.00"><g transform="scale(1.000)"><rect x="1" y="1" width="16" height="16" rx="2" fill="none" stroke="#f6b90e" stroke-width="2"/>
<rect x="1" y="1" width="16" height="4.5" fill="#f6b90e"/><path d="M4 4.5 L5.5 1.5 M8 4.5 L9.5 1.5 M12 4.5 L13.5 1.5" stroke="#fff" stroke-width="1"/>
<rect x="5" y="9.5" width="8" height="3.5" fill="none" stroke="#f6b90e" stroke-width="1.5"/></g></svg>
<svg style="left:1037.50px;top:141.00px;" width="6.00" height="17.60" viewBox="0 0 6.00 17.60"><path d="M0.8 0.8 L5.3 8.8 L0.8 16.8" stroke="#7a7a7a" stroke-width="1.25" fill="none" stroke-linejoin="round"/></svg>
<svg style="left:1048.90px;top:140.00px;" width="19.50" height="19.50" viewBox="0 0 19.50 19.50"><g transform="scale(0.975)"><circle cx="10" cy="10" r="10" fill="#fbbd08"/><rect x="5.3" y="5.3" width="9.4" height="9.4" rx="1" fill="#fff"/></g></svg>
<svg style="left:1181.00px;top:141.00px;" width="6.00" height="17.60" viewBox="0 0 6.00 17.60"><path d="M0.8 0.8 L5.3 8.8 L0.8 16.8" stroke="#7a7a7a" stroke-width="1.25" fill="none" stroke-linejoin="round"/></svg>
<svg style="left:1192.50px;top:139.90px;" width="19.80" height="19.80" viewBox="0 0 19.80 19.80"><g transform="scale(0.990)"><rect x="0" y="0" width="20" height="20" fill="#9b9b9b"/><rect x="3.8" y="3.8" width="12.4" height="12.4" fill="#fff"/></g></svg>
<svg style="left:1254.70px;top:141.00px;" width="6.00" height="17.60" viewBox="0 0 6.00 17.60"><path d="M0.8 0.8 L5.3 8.8 L0.8 16.8" stroke="#7a7a7a" stroke-width="1.25" fill="none" stroke-linejoin="round"/></svg>
<svg style="left:1266.20px;top:139.90px;" width="19.80" height="19.80" viewBox="0 0 19.80 19.80"><g transform="scale(0.990)"><rect x="0" y="0" width="20" height="20" fill="#9b9b9b"/><rect x="3.8" y="3.8" width="12.4" height="12.4" fill="#fff"/></g></svg>
<div class="r" style="left:418.00px;top:271.00px;width:342.00px;height:22.00px;background:#dcdcdc;"></div>
<div class="t" style="left:465.80px;top:179.00px;font-size:14.39px;line-height:14.39px;color:#333333;font-weight:bold;-webkit-text-stroke:0;">View Controller Scene</div>
<div class="t" style="left:486.25px;top:207.00px;font-size:14.82px;line-height:14.82px;color:#333333;">View Controller</div>
<div class="t" style="left:506.20px;top:230.00px;font-size:14.28px;line-height:14.28px;color:#333333;">View</div>
<div class="t" style="left:526.60px;top:252.00px;font-size:14.25px;line-height:14.25px;color:#333333;">Safe Area</div>
<div class="t" style="left:526.60px;top:275.00px;font-size:14.74px;line-height:14.74px;color:#333333;">Social Login List View</div>
<div class="t" style="left:485.50px;top:298.00px;font-size:14.72px;line-height:14.72px;color:#333333;">First Responder</div>
<div class="t" style="left:485.50px;top:322.00px;font-size:13.86px;line-height:13.86px;color:#333333;">Exit</div>
<div class="t" style="left:485.50px;top:344.00px;font-size:14.90px;line-height:14.90px;color:#333333;">Storyboard Entry Point</div>
<svg style="left:423.00px;top:182.80px;" width="10.30" height="6.80" viewBox="0 0 10.30 6.80"><path d="M1 1 L5.15 5.80 L9.30 1" stroke="#6e6b6b" stroke-width="1.60" fill="none" stroke-linecap="round" stroke-linejoin="round"/></svg>
<svg style="left:442.00px;top:176.60px;" width="18.00" height="18.00" viewBox="0 0 18.00 18.00"><g transform="scale(1.000)"><rect x="1" y="1" width="16" height="16" rx="2" fill="none" stroke="#f6b90e" stroke-width="2"/>
<rect x="1" y="1" width="16" height="4.5" fill="#f6b90e"/><path d="M4 4.5 L5.5 1.5 M8 4.5 L9.5 1.5 M12 4.5 L13.5 1.5" stroke="#fff" stroke-width="1"/>
<rect x="5" y="9.5" width="8" height="3.5" fill="none" stroke="#f6b90e" stroke-width="1.5"/></g></svg>
<svg style="left:443.50px;top:210.80px;" width="10.00" height="6.50" viewBox="0 0 10.00 6.50"><path d="M1 1 L5.00 5.50 L9.00 1" stroke="#6e6b6b" stroke-width="1.60" fill="none" stroke-linecap="round" stroke-linejoin="round"/></svg>
<svg style="left:461.00px;top:203.30px;" width="20.20" height="20.20" viewBox="0 0 20.20 20.20"><g transform="scale(1.010)"><circle cx="10" cy="10" r="10" fill="#fbbd08"/><rect x="5.3" y="5.3" width="9.4" height="9.4" rx="1" fill="#fff"/></g></svg>
<svg style="left:464.00px;top:233.90px;" width="10.00" height="6.30" viewBox="0 0 10.00 6.30"><path d="M1 1 L5.00 5.30 L9.00 1" stroke="#6e6b6b" stroke-width="1.60" fill="none" stroke-linecap="round" stroke-linejoin="round"/></svg>
<svg style="left:481.40px;top:226.60px;" width="20.00" height="20.00" viewBox="0 0 20.00 20.00"><g transform="scale(1.000)"><rect x="0" y="0" width="20" height="20" fill="#9b9b9b"/><rect x="3.8" y="3.8" width="12.4" height="12.4" fill="#fff"/></g></svg>
<svg style="left:502.00px;top:249.20px;" width="20.00" height="20.00" viewBox="0 0 20.00 20.00"><g transform="scale(1.000)"><rect x="0" y="0" width="20" height="20" fill="#9b9b9b"/><rect x="3.8" y="3.8" width="12.4" height="12.4" fill="#fff"/><rect x="7" y="6" width="6" height="8" fill="none" stroke="#9a9a9a" stroke-width="1.2"/><rect x="8.7" y="7.7" width="2.6" height="4.6" fill="none" stroke="#9a9a9a" stroke-width="0.9"/></g></svg>
<svg style="left:502.00px;top:272.30px;" width="20.00" height="20.00" viewBox="0 0 20.00 20.00"><g transform="scale(1.000)"><rect x="0" y="0" width="20" height="20" fill="#9b9b9b"/><rect x="3.8" y="3.8" width="12.4" height="12.4" fill="#fff"/></g></svg>
<svg style="left:461.60px;top:294.90px;" width="18.80" height="20.20" viewBox="0 0 18.80 20.20"><path d="M9.4 0 L18.8 4.8 V15.4 L9.4 20.2 L0 15.4 V4.8 Z" fill="#f6a623"/>
<path d="M0.8 5.2 L9.4 9.6 L18 5.2 M9.4 9.6 V19.5" stroke="#fde2b0" stroke-width="0.9" fill="none"/>
<path d="M3.5 9 V13.5 M14 10 V14.5" stroke="#fff" stroke-width="1.2"/></svg>
<svg style="left:461.00px;top:317.60px;" width="20.30" height="20.00" viewBox="0 0 20.30 20.00"><rect x="0" y="0" width="20.3" height="20" fill="#f3a33a"/>
<path d="M12 4.2 H4.5 V15.8 H12" stroke="#fff" stroke-width="1.5" fill="none"/><path d="M8 10 H15.5 M12.8 7.3 L15.5 10 L12.8 12.7" stroke="#fff" stroke-width="1.4" fill="none"/></svg>
<svg style="left:463.00px;top:345.40px;" width="16.00" height="12.20" viewBox="0 0 16.00 12.20"><path d="M0.5 6.1 H15 M9.2 0.7 L15 6.1 L9.2 11.5" stroke="#333" stroke-width="1.6" fill="none" stroke-linecap="round" stroke-linejoin="round"/></svg>
<div class="r" style="left:424.75px;top:1123.60px;width:326.35px;height:27.00px;background:#efefef;border-radius:8px;box-shadow:inset 0 0 0 1px #dcdcdc"></div>
<div class="t" style="left:452.40px;top:1131.00px;font-size:14.85px;line-height:14.85px;color:#b9b9b9;">Filter</div>
<svg style="left:430.90px;top:1129.00px;" width="16.00" height="17.00" viewBox="0 0 16.00 17.00"><circle cx="8" cy="8.5" r="7.3" fill="none" stroke="#333" stroke-width="1.5"/><path d="M4.5 6.3 H11.5 M5.7 9 H10.3 M7 11.6 H9" stroke="#333" stroke-width="1.4"/></svg>
<div class="r" style="left:866.10px;top:178.60px;width:401.80px;height:30.90px;background:#ffffff;box-sizing:border-box;border:1px solid #8e8e8e;border-radius:3px"></div>
<svg style="left:1024.50px;top:187.00px;" width="15.00" height="15.00" viewBox="0 0 15.00 15.00"><g transform="scale(0.750)"><circle cx="10" cy="10" r="10" fill="#fbbd08"/><rect x="5.3" y="5.3" width="9.4" height="9.4" rx="1" fill="#fff"/></g></svg>
<svg style="left:1060.90px;top:187.00px;" width="14.60" height="15.00" viewBox="0 0 14.60 15.00"><path d="M7.3 0 L14.6 3.6 V11.4 L7.3 15 L0 11.4 V3.6 Z" fill="#f6a623"/>
<path d="M0.6 3.9 L7.3 7.2 L14 3.9 M7.3 7.2 V14.5" stroke="#fde2b0" stroke-width="0.8" fill="none"/></svg>
<svg style="left:1095.70px;top:187.00px;" width="15.00" height="15.00" viewBox="0 0 15.00 15.00"><rect x="0" y="0" width="15" height="15" fill="#f3a33a"/>
<path d="M9 3.2 H3.4 V11.8 H9" stroke="#fff" stroke-width="1.2" fill="none"/><path d="M6 7.5 H11.8 M9.8 5.5 L11.8 7.5 L9.8 9.5" stroke="#fff" stroke-width="1.1" fill="none"/></svg>
<svg style="left:860.00px;top:210.00px;" width="420.00" height="880.00" viewBox="0 0 420.00 880.00"><path d="M54.00 10.60 H360.00 A46 46 0 0 1 406.00 56.60 V824.50 A46 46 0 0 1 360.00 870.50 H54.00 A46 46 0 0 1 8.00 824.50 V56.60 A46 46 0 0 1 54.00 10.60 Z" fill="#fff" stroke="#333" stroke-width="1.5"/><path d="M92.30 10.60 Q96.30 10.60 96.30 15.10 V18.30 A24 24 0 0 0 120.30 42.30 H293.90 A24 24 0 0 0 317.90 18.30 V15.10 Q317.90 10.60 322.30 10.60 Z" fill="#000"/><rect x="136.40" y="858.75" width="141.1" height="4.7" rx="2.35" fill="#000"/></svg>
<div class="r" style="left:883.50px;top:625.50px;width:9.00px;height:9.00px;background:#fff;box-sizing:border-box;border:1.6px solid #6a6a6a"></div>
<div class="r" style="left:1061.50px;top:625.50px;width:9.00px;height:9.00px;background:#fff;box-sizing:border-box;border:1.6px solid #6a6a6a"></div>
<div class="r" style="left:1240.50px;top:625.50px;width:9.00px;height:9.00px;background:#fff;box-sizing:border-box;border:1.6px solid #6a6a6a"></div>
<div class="r" style="left:883.50px;top:646.50px;width:9.00px;height:9.00px;background:#fff;box-sizing:border-box;border:1.6px solid #6a6a6a"></div>
<div class="r" style="left:1240.50px;top:646.50px;width:9.00px;height:9.00px;background:#fff;box-sizing:border-box;border:1.6px solid #6a6a6a"></div>
<div class="r" style="left:883.50px;top:666.50px;width:9.00px;height:9.00px;background:#fff;box-sizing:border-box;border:1.6px solid #6a6a6a"></div>
<div class="r" style="left:1061.50px;top:666.50px;width:9.00px;height:9.00px;background:#fff;box-sizing:border-box;border:1.6px solid #6a6a6a"></div>
<div class="r" style="left:1240.50px;top:666.50px;width:9.00px;height:9.00px;background:#fff;box-sizing:border-box;border:1.6px solid #6a6a6a"></div>
<svg style="left:770.00px;top:634.00px;" width="97.00" height="34.00" viewBox="0 0 97.00 34.00"><defs><linearGradient id="ag" gradientUnits="userSpaceOnUse" x1="0" y1="0" x2="94" y2="0"><stop offset="0" stop-color="#8a8a8a" stop-opacity="0"/><stop offset="0.45" stop-color="#8a8a8a" stop-opacity="1"/></linearGradient></defs>
<path d="M0 17 H94" stroke="url(#ag)" stroke-width="2.6"/><path d="M78 1.2 L94.3 17 L78 32.6" stroke="#8a8a8a" stroke-width="2.6" fill="none"/></svg>
<div class="r" style="left:1349.00px;top:194.80px;width:142.60px;height:257.40px;background:#dfdfdf;border-radius:9px;box-shadow:0 0 26px 10px rgba(0,0,0,0.075), 0 2px 6px rgba(0,0,0,0.08), inset 0 0 0 1px #bdbdbd"></div>
<div class="r" style="left:1350.00px;top:195.80px;width:140.60px;height:5.80px;background:#d6d6d6;border-radius:8px 8px 0 0"></div>
<div class="r" style="left:1350.00px;top:201.60px;width:140.60px;height:1.00px;background:#bdbdbd;"></div>
<div class="r" style="left:1350.00px;top:437.50px;width:140.60px;height:13.70px;background:#d8d8d8;border-radius:0 0 8px 8px"></div>
<div class="r" style="left:1350.00px;top:436.50px;width:140.60px;height:1.00px;background:#bdbdbd;"></div>
<div class="r" style="left:1369.60px;top:215.40px;width:98.20px;height:213.00px;background:#ffffff;border-radius:6px 6px 10px 10px"></div>
<div class="r" style="left:1446.00px;top:215.00px;width:23.50px;height:0.80px;background:#c8c8c8;"></div>
<div class="r" style="left:1391.40px;top:215.40px;width:54.60px;height:6.60px;background:#111;border-radius:0 0 4px 4px"></div>
<div class="t" style="left:968.30px;top:1130.00px;font-size:13.88px;line-height:13.88px;color:#6a6a6a;">iPhone 11</div>
<div class="t" style="left:1124.80px;top:1129.00px;font-size:14.39px;line-height:14.39px;color:#6a6a6a;">76%</div>
<svg style="left:772.00px;top:1127.60px;" width="16.60" height="16.30" viewBox="0 0 16.60 16.30"><rect x="0.7" y="0.7" width="15.2" height="14.9" rx="2.5" fill="none" stroke="#6b6b6b" stroke-width="1.4"/><rect x="3.2" y="3.3" width="2.6" height="9.7" fill="#6b6b6b"/></svg>
<svg style="left:800.90px;top:1127.00px;" width="18.40" height="18.40" viewBox="0 0 18.40 18.40"><circle cx="9.2" cy="9.2" r="8.5" fill="none" stroke="#6b6b6b" stroke-width="1.4"/><circle cx="9.2" cy="4.6" r="1.2" fill="#6b6b6b"/><path d="M4.2 6.8 H14.2 M9.2 6.8 V11 L7 15 M9.2 11 L11.4 15" stroke="#6b6b6b" stroke-width="1.3" fill="none"/></svg>
<svg style="left:834.00px;top:1127.00px;" width="18.00" height="18.00" viewBox="0 0 18.00 18.00"><circle cx="9" cy="9" r="8.3" fill="none" stroke="#6b6b6b" stroke-width="1.4"/><path d="M9 0.7 A8.3 8.3 0 0 0 9 17.3 Z" fill="#6b6b6b"/><path d="M9 5 A4 4 0 0 1 9 13 Z" fill="#6b6b6b"/></svg>
<svg style="left:867.90px;top:1124.50px;" width="17.80" height="20.00" viewBox="0 0 17.80 20.00"><rect x="0.7" y="6.5" width="11" height="12.8" rx="1.2" fill="none" stroke="#6b6b6b" stroke-width="1.4"/><path d="M10 2 Q15 2 15 7 M13 5 L15 7.2 L17 5" stroke="#6b6b6b" stroke-width="1.3" fill="none"/></svg>
<svg style="left:901.70px;top:1128.00px;" width="16.30" height="16.00" viewBox="0 0 16.30 16.00"><rect x="0.7" y="0.7" width="14.9" height="14.6" rx="2" fill="none" stroke="#bdbdbd" stroke-width="1.3"/><path d="M8.15 0.7 V15.3" stroke="#bdbdbd" stroke-width="1.3"/></svg>
<svg style="left:937.00px;top:1126.70px;" width="13.30" height="19.30" viewBox="0 0 13.30 19.30"><rect x="0.7" y="0.7" width="11.9" height="17.9" rx="2" fill="none" stroke="#6b6b6b" stroke-width="1.4"/><path d="M4.5 16 H8.8" stroke="#6b6b6b" stroke-width="1.2"/></svg>
<svg style="left:1087.00px;top:1126.00px;" width="18.00" height="18.00" viewBox="0 0 18.00 18.00"><circle cx="7.2" cy="7.2" r="6.4" fill="none" stroke="#6b6b6b" stroke-width="1.4"/><path d="M4 7.2 H10.4" stroke="#6b6b6b" stroke-width="1.4"/><path d="M11.8 11.8 L17 17" stroke="#6b6b6b" stroke-width="1.8" stroke-linecap="round"/></svg>
<svg style="left:1171.40px;top:1126.00px;" width="18.60" height="18.00" viewBox="0 0 18.60 18.00"><circle cx="7.2" cy="7.2" r="6.4" fill="none" stroke="#6b6b6b" stroke-width="1.4"/><path d="M4 7.2 H10.4 M7.2 4 V10.4" stroke="#6b6b6b" stroke-width="1.4"/><path d="M11.8 11.8 L17 17" stroke="#6b6b6b" stroke-width="1.8" stroke-linecap="round"/></svg>
<svg style="left:1349.50px;top:1125.50px;" width="19.50" height="20.00" viewBox="0 0 19.50 20.00"><path d="M0.7 5 V0.7 H5 M14.5 0.7 H18.8 V5 M18.8 15 V19.3 H14.5 M5 19.3 H0.7 V15" stroke="#6b6b6b" stroke-width="1.4" fill="none"/><path d="M4.78 9.28 A5.3 5.3 0 1 1 9.54 15.48" stroke="#6b6b6b" stroke-width="1.3" fill="none"/><path d="M9.25 11.9 L6.9 14.9 L9.7 17.3" stroke="#6b6b6b" stroke-width="1.3" fill="none" stroke-linejoin="round"/></svg>
<svg style="left:1382.20px;top:1125.50px;" width="19.60" height="20.00" viewBox="0 0 19.60 20.00"><path d="M0.7 0 V20" stroke="#6b6b6b" stroke-width="1.4"/><rect x="3.5" y="3.2" width="10" height="5.5" fill="none" stroke="#6b6b6b" stroke-width="1.4"/><rect x="3.5" y="11.5" width="15.4" height="5.5" fill="none" stroke="#6b6b6b" stroke-width="1.4"/></svg>
<svg style="left:1415.80px;top:1125.50px;" width="19.20" height="20.00" viewBox="0 0 19.20 20.00"><rect x="5.8" y="5.8" width="7.6" height="8.4" fill="none" stroke="#6b6b6b" stroke-width="1.4"/><path d="M9.6 0.7 V4.3 M9.6 15.7 V19.3 M7.3 0.7 H11.9 M7.3 19.3 H11.9 M0.7 10 H4.3 M14.9 10 H18.5 M0.7 7.8 V12.2 M18.5 7.8 V12.2" stroke="#6b6b6b" stroke-width="1.3"/></svg>
<svg style="left:1448.40px;top:1125.50px;" width="19.90" height="20.00" viewBox="0 0 19.90 20.00"><path d="M10 5 L15 14 H5 Z" fill="none" stroke="#6b6b6b" stroke-width="1.4" stroke-linejoin="round"/><circle cx="10" cy="11" r="1.3" fill="#6b6b6b"/><path d="M0 10 H4 M16 10 H19.9 M0.7 8 V12 M19.2 8 V12" stroke="#6b6b6b" stroke-width="1.3"/></svg>
<svg style="left:1484.00px;top:1125.50px;" width="20.00" height="20.00" viewBox="0 0 20.00 20.00"><path d="M6 3 H0.7 V19.3 H19.3 V3 H14" stroke="#6b6b6b" stroke-width="1.4" fill="none"/><path d="M10 0 V12 M6 8 L10 12 L14 8" stroke="#6b6b6b" stroke-width="1.4" fill="none"/></svg>
<div class="t" style="left:804.30px;top:1166.00px;font-size:14.32px;line-height:14.32px;color:#333333;">GuardDemo</div>
<svg style="left:432.00px;top:1167.50px;" width="19.50" height="11.40" viewBox="0 0 19.50 11.40"><path d="M1.5 0 H15 L19.5 5.7 L15 11.4 H1.5 Q0 11.4 0 9.9 V1.5 Q0 0 1.5 0 Z" fill="#1a7cf5"/></svg>
<div class="r" style="left:461.10px;top:1164.00px;width:1.00px;height:18.00px;background:#e0e0e0;"></div>
<svg style="left:475.50px;top:1164.50px;" width="12.00" height="17.00" viewBox="0 0 12.00 17.00"><rect x="0.7" y="0.7" width="3.2" height="15.6" rx="1" fill="none" stroke="#6b6b6b" stroke-width="1.4"/><rect x="8.1" y="0.7" width="3.2" height="15.6" rx="1" fill="none" stroke="#6b6b6b" stroke-width="1.4"/></svg>
<svg style="left:505.00px;top:1160.00px;" width="105.00" height="26.00" viewBox="0 0 105.00 26.00"><g stroke="#b5b5b5" stroke-width="1.3" fill="none" stroke-linejoin="round">
<path d="M6.3 15.6 L14.3 7.7 L22.4 15.6 M22.4 10.6 V15.6 H17.3"/>
<rect x="9.6" y="17.9" width="10.1" height="2.6"/>
<path d="M52.5 5 V15.6 M48 11.2 L52.5 15.7 L57 11.2"/>
<rect x="47.6" y="17.9" width="10.1" height="2.6"/>
<path d="M90.5 15.6 V5 M86.3 9.4 L90.5 5 L94.7 9.4"/>
<rect x="85.8" y="17.9" width="10.1" height="2.6"/></g></svg>
<div class="r" style="left:614.80px;top:1164.00px;width:1.00px;height:18.00px;background:#e0e0e0;"></div>
<svg style="left:627.60px;top:1164.50px;" width="14.40" height="17.00" viewBox="0 0 14.40 17.00"><path d="M5.9 7.6 L13.8 4 V13.3 L5.9 16.5 Z" stroke="#6b6b6b" stroke-width="1.3" fill="none" stroke-linejoin="round"/><path d="M3.7 14.9 V6.2 L11 2.2 M0.9 13.3 V4.4 L8.6 0.8" stroke="#6b6b6b" stroke-width="1.2" fill="none" stroke-linecap="round" stroke-linejoin="round"/></svg>
<svg style="left:664.50px;top:1164.00px;" width="17.50" height="18.00" viewBox="0 0 17.50 18.00"><circle cx="3.5" cy="3.5" r="2.8" fill="none" stroke="#6b6b6b" stroke-width="1.3"/><circle cx="3.5" cy="14.5" r="2.8" fill="none" stroke="#6b6b6b" stroke-width="1.3"/><circle cx="14" cy="9" r="2.8" fill="none" stroke="#6b6b6b" stroke-width="1.3"/><path d="M5.8 5 L11.2 8 M5.8 13 L11.2 10" stroke="#6b6b6b" stroke-width="1.2"/></svg>
<svg style="left:703.50px;top:1164.00px;" width="15.30" height="18.00" viewBox="0 0 15.30 18.00"><rect x="0.7" y="0.7" width="13.9" height="7" rx="3.5" fill="none" stroke="#6b6b6b" stroke-width="1.3"/><circle cx="4.2" cy="4.2" r="1.8" fill="#6b6b6b"/><rect x="0.7" y="10.3" width="13.9" height="7" rx="3.5" fill="none" stroke="#6b6b6b" stroke-width="1.3"/><circle cx="11.1" cy="13.8" r="1.8" fill="#6b6b6b"/></svg>
<svg style="left:741.30px;top:1164.50px;" width="16.60" height="17.00" viewBox="0 0 16.60 17.00"><path d="M16 0.6 L0.7 6.5 L7.5 9.3 L10 16.4 Z" stroke="#6b6b6b" stroke-width="1.3" fill="none" stroke-linejoin="round"/></svg>
<div class="r" style="left:768.50px;top:1164.00px;width:1.00px;height:18.00px;background:#e0e0e0;"></div>
<svg style="left:778.80px;top:1163.00px;" width="20.00" height="20.80" viewBox="0 0 20.00 20.80"><rect x="0.4" y="0.4" width="19.2" height="20" rx="4.8" fill="#f0f0f0" stroke="#d2d2d2" stroke-width="0.8"/><ellipse cx="5.00" cy="5.00" rx="2.2" ry="1.6" transform="rotate(45 5.00 5.00)" fill="none" stroke="#c4c4c4" stroke-width="0.8"/><ellipse cx="10.00" cy="3.90" rx="2.2" ry="1.6" transform="rotate(0 10.00 3.90)" fill="none" stroke="#c4c4c4" stroke-width="0.8"/><ellipse cx="15.00" cy="5.00" rx="2.2" ry="1.6" transform="rotate(-45 15.00 5.00)" fill="none" stroke="#c4c4c4" stroke-width="0.8"/><ellipse cx="3.90" cy="10.40" rx="2.2" ry="1.6" transform="rotate(90 3.90 10.40)" fill="none" stroke="#c4c4c4" stroke-width="0.8"/><ellipse cx="16.10" cy="10.40" rx="2.2" ry="1.6" transform="rotate(90 16.10 10.40)" fill="none" stroke="#c4c4c4" stroke-width="0.8"/><ellipse cx="5.00" cy="15.80" rx="2.2" ry="1.6" transform="rotate(-45 5.00 15.80)" fill="none" stroke="#c4c4c4" stroke-width="0.8"/><ellipse cx="10.00" cy="16.90" rx="2.2" ry="1.6" transform="rotate(0 10.00 16.90)" fill="none" stroke="#c4c4c4" stroke-width="0.8"/><ellipse cx="15.00" cy="15.80" rx="2.2" ry="1.6" transform="rotate(45 15.00 15.80)" fill="none" stroke="#c4c4c4" stroke-width="0.8"/>
<circle cx="10" cy="10.4" r="3.2" fill="none" stroke="#c4c4c4" stroke-width="0.8"/>
<path d="M6.7 0.5 V20.3 M13.3 0.5 V20.3 M0.5 7 H19.5 M0.5 13.8 H19.5 M1.5 1.5 L18.5 19.3 M18.5 1.5 L1.5 19.3" stroke="#d0d0d0" stroke-width="0.5"/></svg>
<svg style="left:1485.00px;top:1164.70px;" width="17.00" height="16.30" viewBox="0 0 17.00 16.30"><rect x="0.7" y="0.7" width="15.6" height="14.9" rx="2.5" fill="none" stroke="#6b6b6b" stroke-width="1.4"/><rect x="3" y="10" width="11" height="3.3" fill="#6b6b6b"/></svg>
<svg style="left:1563.00px;top:106.90px;" width="13.40" height="16.30" viewBox="0 0 13.40 16.30"><path d="M0.7 1.5 Q0.7 0.7 1.5 0.7 H8 L12.7 5.5 V14.8 Q12.7 15.6 11.9 15.6 H1.5 Q0.7 15.6 0.7 14.8 Z M8 0.7 V5.5 H12.7" stroke="#6b6b6b" stroke-width="1.3" fill="none" stroke-linejoin="round"/></svg>
<svg style="left:1599.00px;top:106.90px;" width="17.00" height="17.00" viewBox="0 0 17.00 17.00"><circle cx="8.5" cy="8.5" r="7.8" fill="none" stroke="#6b6b6b" stroke-width="1.3"/><path d="M8.5 3.5 V8.5 H5" stroke="#6b6b6b" stroke-width="1.3" fill="none"/></svg>
<svg style="left:1637.40px;top:106.90px;" width="16.60" height="16.60" viewBox="0 0 16.60 16.60"><circle cx="8.3" cy="8.3" r="7.6" fill="none" stroke="#6b6b6b" stroke-width="1.3"/><path d="M6 6.2 Q6 3.8 8.3 3.8 Q10.6 3.8 10.6 6 Q10.6 7.5 8.3 8.5 V10" stroke="#6b6b6b" stroke-width="1.3" fill="none"/><circle cx="8.3" cy="12.5" r="0.9" fill="#6b6b6b"/></svg>
<svg style="left:1675.50px;top:108.25px;" width="16.40" height="13.75" viewBox="0 0 16.40 13.75"><rect x="0" y="0" width="16.4" height="13.75" rx="2" fill="#1a7cf5"/><rect x="2.3" y="2.3" width="6" height="5.3" fill="#fff"/><path d="M9.8 3 H14 M9.8 5.2 H14 M9.8 7.4 H14 M2.3 10.5 H14" stroke="#fff" stroke-width="1.2"/></svg>
<svg style="left:1713.40px;top:106.90px;" width="16.60" height="16.60" viewBox="0 0 16.60 16.60"><path d="M0 2.8 H16.6 M0 8.3 H16.6 M0 13.8 H16.6" stroke="#6b6b6b" stroke-width="1.3"/><circle cx="11.5" cy="2.8" r="1.8" fill="#f3eeee" stroke="#6b6b6b" stroke-width="1.2"/><circle cx="4.5" cy="8.3" r="1.8" fill="#f3eeee" stroke="#6b6b6b" stroke-width="1.2"/><circle cx="11.5" cy="13.8" r="1.8" fill="#f3eeee" stroke="#6b6b6b" stroke-width="1.2"/></svg>
<svg style="left:1751.20px;top:106.90px;" width="16.00" height="16.30" viewBox="0 0 16.00 16.30"><path d="M0.7 0.7 L15.3 15.6 H0.7 Z" stroke="#6b6b6b" stroke-width="1.3" fill="none" stroke-linejoin="round"/><path d="M3.5 8 L9 13 H3.5 Z" stroke="#6b6b6b" stroke-width="1.1" fill="none"/></svg>
<svg style="left:1789.50px;top:106.90px;" width="16.70" height="16.60" viewBox="0 0 16.70 16.60"><path d="M14 4 A7.5 7.5 0 1 0 14 12.6" stroke="#6b6b6b" stroke-width="1.4" fill="none"/><circle cx="8.3" cy="8.3" r="2.6" fill="#6b6b6b"/><path d="M8.3 8.3 H16.7" stroke="#6b6b6b" stroke-width="1.4"/></svg>
<div class="t" style="left:1528.25px;top:141.00px;font-size:15.56px;line-height:15.56px;color:#787575;font-weight:bold;-webkit-text-stroke:0;">Custom Class</div>
<div class="t" style="left:1587.40px;top:178.00px;font-size:12.76px;line-height:12.76px;color:#3a3a3a;">Class</div>
<div class="t" style="left:1575.30px;top:205.00px;font-size:13.42px;line-height:13.42px;color:#3a3a3a;">Module</div>
<div class="r" style="left:1627.00px;top:171.30px;width:212.40px;height:20.70px;background:#ffffff;border-radius:4px;box-shadow:0 0.5px 1px rgba(0,0,0,0.25), 0 0 0 0.5px rgba(0,0,0,0.08)"></div>
<div class="t" style="left:1630.90px;top:175.00px;font-size:14.77px;line-height:14.77px;color:#262626;">SocialLoginListView</div>
<div class="r" style="left:1623.00px;top:195.90px;width:218.40px;height:26.50px;background:#7fa6ee;border-radius:7px"></div>
<div class="r" style="left:1627.00px;top:199.70px;width:212.40px;height:18.90px;background:#ffffff;border-radius:3px"></div>
<div class="t" style="left:1630.90px;top:203.00px;font-size:13.89px;line-height:13.89px;color:#262626;">Guard</div>
<svg style="left:1801.90px;top:174.50px;" width="12.40" height="12.50" viewBox="0 0 12.40 12.50"><circle cx="6.2" cy="6.25" r="6.2" fill="#7a7a7a"/><path d="M2.8 6.25 H9 M6.5 3.5 L9.2 6.25 L6.5 9" stroke="#fff" stroke-width="1.3" fill="none"/></svg>
<svg style="left:1822.20px;top:173.60px;" width="14.90" height="15.00" viewBox="0 0 14.90 15.00"><rect x="0" y="0" width="14.9" height="15" rx="3" fill="#1a7cf5"/><path d="M4.5 6 L7.45 8.8 L10.4 6" stroke="#fff" stroke-width="1.4" fill="none"/></svg>
<svg style="left:1822.20px;top:201.75px;" width="14.90" height="15.00" viewBox="0 0 14.90 15.00"><rect x="0" y="0" width="14.9" height="15" rx="3" fill="#1a7cf5"/><path d="M4.5 6 L7.45 8.8 L10.4 6" stroke="#fff" stroke-width="1.4" fill="none"/></svg>
<div class="r" style="left:1570.20px;top:166.70px;width:273.80px;height:61.30px;background:transparent;box-sizing:border-box;border:3px solid #fe2a1c"></div>
<div class="r" style="left:1625.70px;top:229.25px;width:14.60px;height:14.30px;background:#ffffff;border-radius:3px;box-shadow:0 0 0 0.6px rgba(0,0,0,0.14), 0 0.5px 1px rgba(0,0,0,0.12)"></div>
<div class="t" style="left:1646.30px;top:229.00px;font-size:14.88px;line-height:14.88px;color:#262626;">Inherit Module From Target</div>
<div class="r" style="left:1528.60px;top:263.10px;width:310.00px;height:1.00px;background:#dcd8d8;"></div>
<div class="t" style="left:1528.20px;top:272.00px;font-size:16.23px;line-height:16.23px;color:#787575;font-weight:bold;-webkit-text-stroke:0;">Identity</div>
<div class="t" style="left:1533.90px;top:309.00px;font-size:13.35px;line-height:13.35px;color:#3a3a3a;">Restoration ID</div>
<div class="r" style="left:1626.90px;top:304.90px;width:211.20px;height:20.20px;background:#ffffff;box-shadow:0 0 0 0.5px rgba(0,0,0,0.07), 0 1px 1px rgba(0,0,0,0.13)"></div>
<div class="r" style="left:1528.60px;top:342.00px;width:310.00px;height:1.00px;background:#dcd8d8;"></div>
<div class="t" style="left:1528.20px;top:351.00px;font-size:16.08px;line-height:16.08px;color:#787575;font-weight:bold;-webkit-text-stroke:0;">User Defined Runtime Attributes</div>
<div class="r" style="left:1529.20px;top:376.30px;width:309.00px;height:122.40px;background:#ffffff;box-sizing:border-box;border:1px solid #c6c3c3"></div>
<div class="r" style="left:1530.20px;top:411.60px;width:307.00px;height:1.00px;background:#e2e2e2;"></div>
<div class="t" style="left:1540.75px;top:389.00px;font-size:13.97px;line-height:13.97px;color:#262626;">Key Path</div>
<div class="t" style="left:1703.20px;top:389.00px;font-size:13.98px;line-height:13.98px;color:#262626;">Type</div>
<div class="t" style="left:1789.20px;top:389.00px;font-size:13.56px;line-height:13.56px;color:#262626;">Val...</div>
<div class="r" style="left:1697.20px;top:385.00px;width:1.00px;height:19.00px;background:#e0e0e0;"></div>
<div class="r" style="left:1783.60px;top:385.00px;width:1.00px;height:19.00px;background:#e0e0e0;"></div>
<svg style="left:1536.30px;top:480.90px;" width="13.70" height="13.40" viewBox="0 0 13.70 13.40"><path d="M6.85 0 V13.4 M0 6.7 H13.7" stroke="#555" stroke-width="1.4"/></svg>
<svg style="left:1562.20px;top:486.90px;" width="12.90" height="1.50" viewBox="0 0 12.90 1.50"><path d="M0 0.75 H12.9" stroke="#c0c0c0" stroke-width="1.3"/></svg>
<div class="r" style="left:1528.60px;top:510.00px;width:310.00px;height:1.00px;background:#dcd8d8;"></div>
<div class="t" style="left:1527.90px;top:520.00px;font-size:15.83px;line-height:15.83px;color:#787575;font-weight:bold;-webkit-text-stroke:0;">Document</div>
<div class="t" style="left:1587.40px;top:555.00px;font-size:13.04px;line-height:13.04px;color:#3a3a3a;">Label</div>
<div class="r" style="left:1626.70px;top:551.80px;width:211.70px;height:20.10px;background:#ffffff;box-shadow:0 0 0 0.5px rgba(0,0,0,0.07), 0 1px 1px rgba(0,0,0,0.13)"></div>
<div class="t" style="left:1631.00px;top:554.00px;font-size:14.85px;line-height:14.85px;color:#c4c1c1;">Xcode Specific Label</div>
<svg style="left:1629.00px;top:584.90px;" width="9.80" height="8.80" viewBox="0 0 9.80 8.80"><path d="M0.9 0.9 L8.9 7.9 M8.9 0.9 L0.9 7.9" stroke="#333" stroke-width="1.9"/></svg>
<div class="r" style="left:1649.10px;top:583.00px;width:10.70px;height:10.70px;background:#f4a49a;border-radius:2px;box-shadow:0 0.5px 1px rgba(0,0,0,0.15)"></div>
<div class="r" style="left:1671.97px;top:583.00px;width:10.70px;height:10.70px;background:#f6c282;border-radius:2px;box-shadow:0 0.5px 1px rgba(0,0,0,0.15)"></div>
<div class="r" style="left:1694.84px;top:583.00px;width:10.70px;height:10.70px;background:#f7e08c;border-radius:2px;box-shadow:0 0.5px 1px rgba(0,0,0,0.15)"></div>
<div class="r" style="left:1717.71px;top:583.00px;width:10.70px;height:10.70px;background:#cfe49e;border-radius:2px;box-shadow:0 0.5px 1px rgba(0,0,0,0.15)"></div>
<div class="r" style="left:1740.58px;top:583.00px;width:10.70px;height:10.70px;background:#a3c3f3;border-radius:2px;box-shadow:0 0.5px 1px rgba(0,0,0,0.15)"></div>
<div class="r" style="left:1763.45px;top:583.00px;width:10.70px;height:10.70px;background:#d8bdf0;border-radius:2px;box-shadow:0 0.5px 1px rgba(0,0,0,0.15)"></div>
<div class="r" style="left:1786.32px;top:583.00px;width:10.70px;height:10.70px;background:#d6d6d6;border-radius:2px;box-shadow:0 0.5px 1px rgba(0,0,0,0.15)"></div>
<div class="t" style="left:1562.90px;top:609.00px;font-size:13.53px;line-height:13.53px;color:#3a3a3a;">Object ID</div>
<div class="t" style="left:1628.30px;top:608.00px;font-size:14.54px;line-height:14.54px;color:#262626;">gYF-Uv-DQA</div>
<div class="t" style="left:1591.30px;top:634.00px;font-size:13.26px;line-height:13.26px;color:#3a3a3a;">Lock</div>
<div class="r" style="left:1626.70px;top:630.20px;width:212.50px;height:19.50px;background:#ffffff;border-radius:4px;box-shadow:0 0 0 0.5px rgba(0,0,0,0.1), 0 1px 1.5px rgba(0,0,0,0.2)"></div>
<svg style="left:1822.30px;top:632.20px;" width="14.90" height="15.50" viewBox="0 0 14.90 15.50"><rect x="0" y="0" width="14.9" height="15.5" rx="3" fill="#1a7cf5"/><path d="M4.8 5.8 L7.45 3.4 L10.1 5.8 M4.8 9.7 L7.45 12.1 L10.1 9.7" stroke="#fff" stroke-width="1.3" fill="none"/></svg>
<div class="t" style="left:1634.50px;top:632.00px;font-size:15.27px;line-height:15.27px;color:#262626;">Inherited - (Nothing)</div>
<div class="t" style="left:1536.30px;top:663.00px;font-size:13.70px;line-height:13.70px;color:#3a3a3a;">Localizer Hint</div>
<div class="r" style="left:1626.70px;top:659.40px;width:211.70px;height:20.20px;background:#ffffff;box-shadow:0 0 0 0.5px rgba(0,0,0,0.07), 0 1px 1px rgba(0,0,0,0.13)"></div>
<div class="t" style="left:1631.00px;top:662.00px;font-size:14.66px;line-height:14.66px;color:#c4c1c1;">Comment For Localizer</div>
<div class="r" style="left:1528.60px;top:696.00px;width:310.00px;height:1.00px;background:#dcd8d8;"></div>
<div class="t" style="left:1528.00px;top:706.00px;font-size:15.83px;line-height:15.83px;color:#787575;font-weight:bold;-webkit-text-stroke:0;">Accessibility</div>
<div class="t" style="left:1544.00px;top:737.00px;font-size:13.83px;line-height:13.83px;color:#3a3a3a;">Accessibility</div>
<div class="r" style="left:1626.70px;top:736.70px;width:14.60px;height:14.30px;background:#ffffff;border-radius:3px;box-shadow:0 0 0 0.6px rgba(0,0,0,0.14), 0 0.5px 1px rgba(0,0,0,0.12)"></div>
<div class="t" style="left:1647.70px;top:736.00px;font-size:14.01px;line-height:14.01px;color:#262626;">Enabled</div>
<div class="t" style="left:1587.40px;top:764.00px;font-size:13.04px;line-height:13.04px;color:#3a3a3a;">Label</div>
<div class="r" style="left:1626.70px;top:760.70px;width:211.70px;height:20.00px;background:#ffffff;box-shadow:0 0 0 0.5px rgba(0,0,0,0.07), 0 1px 1px rgba(0,0,0,0.13)"></div>
<div class="t" style="left:1631.00px;top:763.00px;font-size:14.70px;line-height:14.70px;color:#c4c1c1;">Label</div>
<div class="t" style="left:1595.20px;top:794.00px;font-size:13.55px;line-height:13.55px;color:#3a3a3a;">Hint</div>
<div class="r" style="left:1626.70px;top:789.90px;width:211.70px;height:20.00px;background:#ffffff;box-shadow:0 0 0 0.5px rgba(0,0,0,0.07), 0 1px 1px rgba(0,0,0,0.13)"></div>
<div class="t" style="left:1631.00px;top:793.00px;font-size:14.70px;line-height:14.70px;color:#c4c1c1;">Hint</div>
<div class="t" style="left:1565.40px;top:822.00px;font-size:14.05px;line-height:14.05px;color:#3a3a3a;">Identifier</div>
<div class="r" style="left:1626.70px;top:819.00px;width:211.70px;height:20.50px;background:#ffffff;box-shadow:0 0 0 0.5px rgba(0,0,0,0.07), 0 1px 1px rgba(0,0,0,0.13)"></div>
<div class="t" style="left:1631.00px;top:822.00px;font-size:14.70px;line-height:14.70px;color:#c4c1c1;">Identifier</div>
<div class="r" style="left:1528.60px;top:845.20px;width:310.00px;height:1.00px;background:#dcd8d8;"></div>
<div class="t" style="left:1586.80px;top:855.00px;font-size:13.20px;line-height:13.20px;color:#3a3a3a;">Traits</div>
<div class="r" style="left:1626.70px;top:854.00px;width:14.60px;height:14.30px;background:#ffffff;border-radius:3px;box-shadow:0 0 0 0.6px rgba(0,0,0,0.14), 0 0.5px 1px rgba(0,0,0,0.12)"></div>
<div class="t" style="left:1647.10px;top:854.00px;font-size:14.70px;line-height:14.70px;color:#262626;">Button</div>
<div class="r" style="left:1626.70px;top:876.89px;width:14.60px;height:14.30px;background:#ffffff;border-radius:3px;box-shadow:0 0 0 0.6px rgba(0,0,0,0.14), 0 0.5px 1px rgba(0,0,0,0.12)"></div>
<div class="t" style="left:1647.10px;top:877.00px;font-size:14.70px;line-height:14.70px;color:#262626;">Image</div>
<div class="r" style="left:1626.70px;top:899.78px;width:14.60px;height:14.30px;background:#ffffff;border-radius:3px;box-shadow:0 0 0 0.6px rgba(0,0,0,0.14), 0 0.5px 1px rgba(0,0,0,0.12)"></div>
<div class="t" style="left:1647.10px;top:900.00px;font-size:14.70px;line-height:14.70px;color:#262626;">Static Text</div>
<div class="r" style="left:1626.70px;top:922.67px;width:14.60px;height:14.30px;background:#ffffff;border-radius:3px;box-shadow:0 0 0 0.6px rgba(0,0,0,0.14), 0 0.5px 1px rgba(0,0,0,0.12)"></div>
<div class="t" style="left:1647.10px;top:922.00px;font-size:14.70px;line-height:14.70px;color:#262626;">Search Field</div>
<div class="r" style="left:1626.70px;top:945.56px;width:14.60px;height:14.30px;background:#ffffff;border-radius:3px;box-shadow:0 0 0 0.6px rgba(0,0,0,0.14), 0 0.5px 1px rgba(0,0,0,0.12)"></div>
<div class="t" style="left:1647.10px;top:945.00px;font-size:14.70px;line-height:14.70px;color:#262626;">Plays Sound</div>
<div class="r" style="left:1626.70px;top:968.45px;width:14.60px;height:14.30px;background:#ffffff;border-radius:3px;box-shadow:0 0 0 0.6px rgba(0,0,0,0.14), 0 0.5px 1px rgba(0,0,0,0.12)"></div>
<div class="t" style="left:1647.10px;top:968.00px;font-size:14.70px;line-height:14.70px;color:#262626;">Keyboard Key</div>
<div class="r" style="left:1626.70px;top:991.34px;width:14.60px;height:14.30px;background:#ffffff;border-radius:3px;box-shadow:0 0 0 0.6px rgba(0,0,0,0.14), 0 0.5px 1px rgba(0,0,0,0.12)"></div>
<div class="t" style="left:1647.10px;top:991.00px;font-size:14.70px;line-height:14.70px;color:#262626;">Summary Element</div>
<svg style="left:1626.70px;top:1014.23px;" width="14.90" height="15.10" viewBox="0 0 14.90 15.10"><rect x="0" y="0" width="14.9" height="15.1" rx="3" fill="#1a7cf5"/><path d="M3.5 7.8 L6.2 10.8 L11.5 4.2" stroke="#fff" stroke-width="1.8" fill="none" stroke-linecap="round" stroke-linejoin="round"/></svg>
<div class="t" style="left:1647.10px;top:1014.00px;font-size:14.70px;line-height:14.70px;color:#262626;">User Interaction Enabled</div>
<div class="r" style="left:1626.70px;top:1037.12px;width:14.60px;height:14.30px;background:#ffffff;border-radius:3px;box-shadow:0 0 0 0.6px rgba(0,0,0,0.14), 0 0.5px 1px rgba(0,0,0,0.12)"></div>
<div class="t" style="left:1647.10px;top:1037.00px;font-size:14.70px;line-height:14.70px;color:#262626;">Updates Frequently</div>
<div class="r" style="left:1626.70px;top:1060.01px;width:14.60px;height:14.30px;background:#ffffff;border-radius:3px;box-shadow:0 0 0 0.6px rgba(0,0,0,0.14), 0 0.5px 1px rgba(0,0,0,0.12)"></div>
<div class="t" style="left:1647.10px;top:1060.00px;font-size:14.70px;line-height:14.70px;color:#262626;">Starts Media Session</div>
<div class="r" style="left:1626.70px;top:1082.90px;width:14.60px;height:14.30px;background:#ffffff;border-radius:3px;box-shadow:0 0 0 0.6px rgba(0,0,0,0.14), 0 0.5px 1px rgba(0,0,0,0.12)"></div>
<div class="t" style="left:1647.10px;top:1083.00px;font-size:14.70px;line-height:14.70px;color:#262626;">Adjustable</div>
<div class="r" style="left:1626.70px;top:1105.79px;width:14.60px;height:14.30px;background:#ffffff;border-radius:3px;box-shadow:0 0 0 0.6px rgba(0,0,0,0.14), 0 0.5px 1px rgba(0,0,0,0.12)"></div>
<div class="t" style="left:1647.10px;top:1106.00px;font-size:14.70px;line-height:14.70px;color:#262626;">Allows Direct Interaction</div>
<div class="r" style="left:1626.70px;top:1128.68px;width:14.60px;height:14.30px;background:#ffffff;border-radius:3px;box-shadow:0 0 0 0.6px rgba(0,0,0,0.14), 0 0.5px 1px rgba(0,0,0,0.12)"></div>
<div class="t" style="left:1647.10px;top:1128.00px;font-size:14.70px;line-height:14.70px;color:#262626;">Causes Page Turn</div>
<div class="r" style="left:1626.70px;top:1151.57px;width:14.60px;height:14.30px;background:#ffffff;border-radius:3px;box-shadow:0 0 0 0.6px rgba(0,0,0,0.14), 0 0.5px 1px rgba(0,0,0,0.12)"></div>
<div class="t" style="left:1647.10px;top:1151.00px;font-size:14.70px;line-height:14.70px;color:#262626;">Header</div>
<div class="r" style="left:1738.60px;top:854.00px;width:14.60px;height:14.30px;background:#ffffff;border-radius:3px;box-shadow:0 0 0 0.6px rgba(0,0,0,0.14), 0 0.5px 1px rgba(0,0,0,0.12)"></div>
<div class="t" style="left:1758.60px;top:854.00px;font-size:14.70px;line-height:14.70px;color:#262626;">Link</div>
<div class="r" style="left:1738.60px;top:876.89px;width:14.60px;height:14.30px;background:#ffffff;border-radius:3px;box-shadow:0 0 0 0.6px rgba(0,0,0,0.14), 0 0.5px 1px rgba(0,0,0,0.12)"></div>
<div class="t" style="left:1758.60px;top:877.00px;font-size:14.70px;line-height:14.70px;color:#262626;">Selected</div>
<div class="r" style="left:1529.00px;top:1182.00px;width:309.00px;height:1.00px;background:#dcd8d8;"></div>
</div></div>
</body></html>
